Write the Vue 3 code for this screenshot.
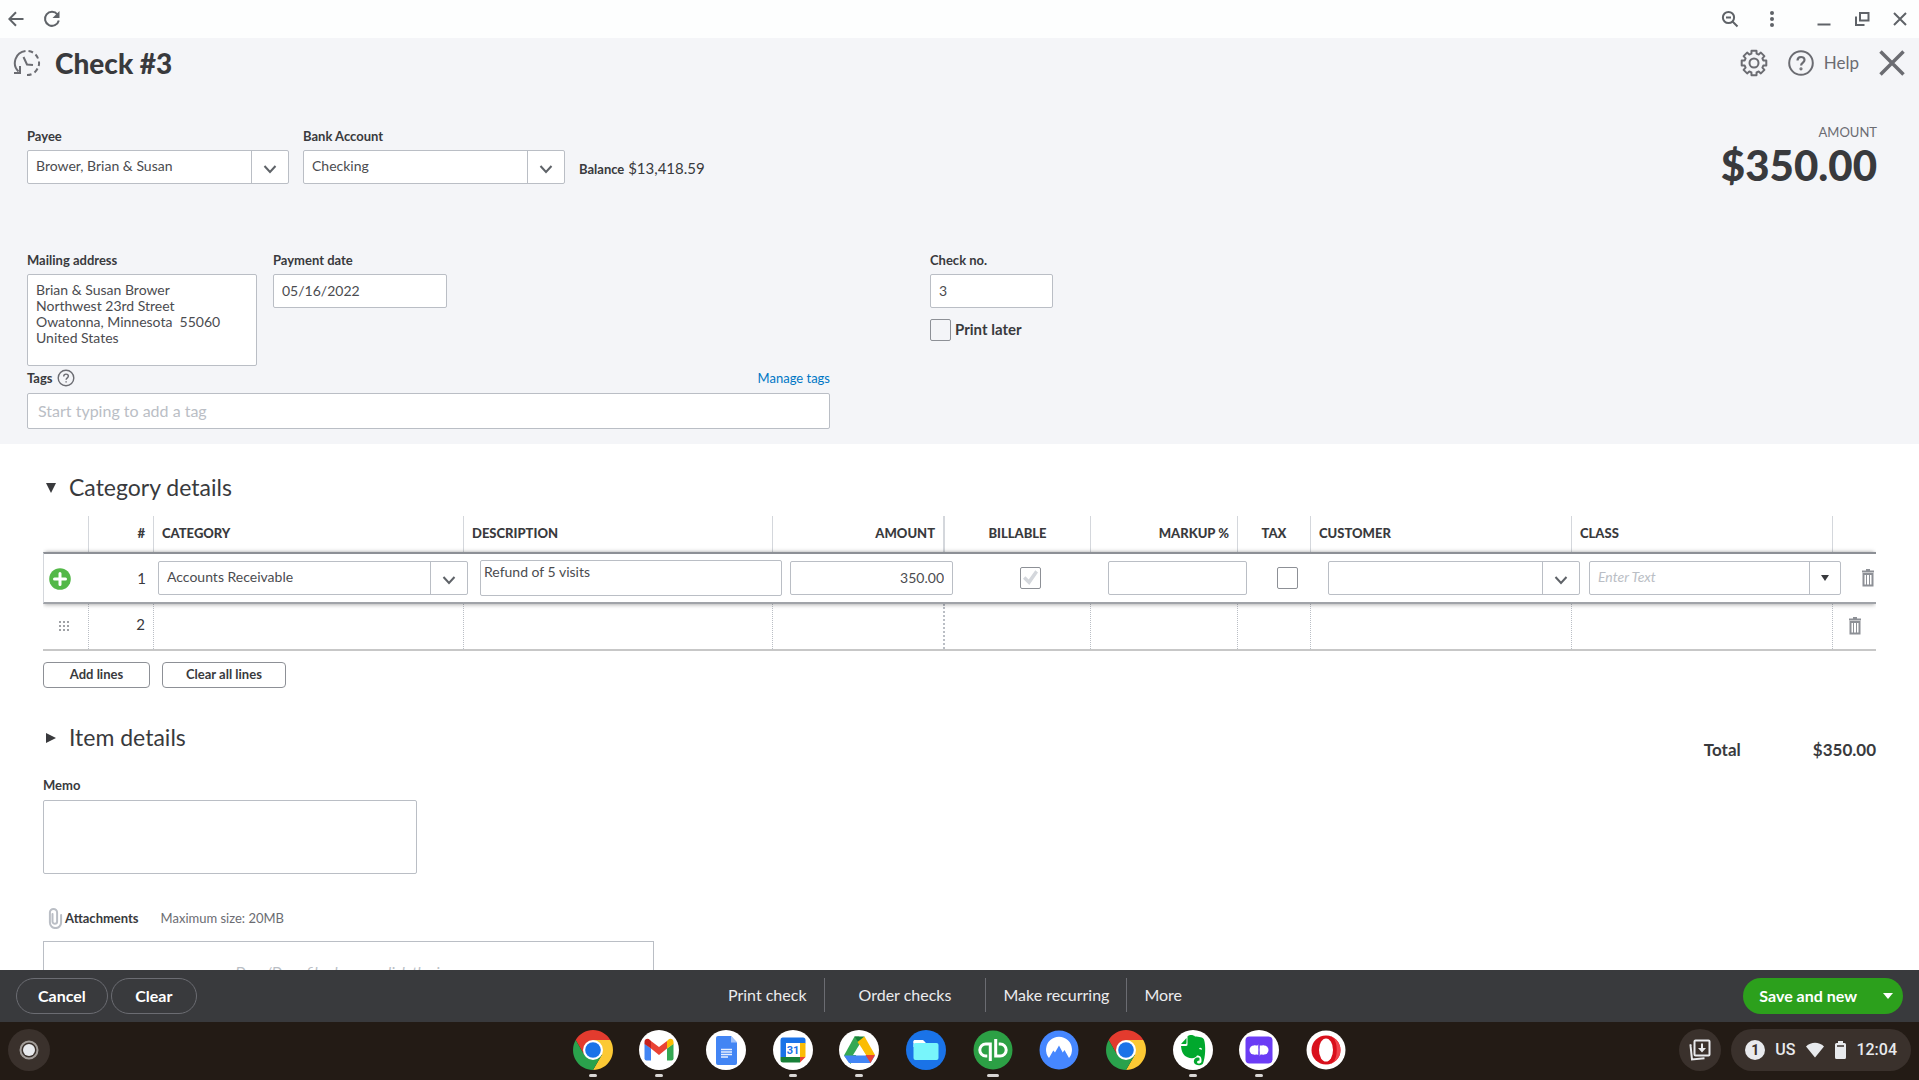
<template>
  <div class="window">
    <!-- browser bar -->
    <nav class="browser-bar">
      <button class="icon-btn" aria-label="Back">
        <svg width="16" height="16" viewBox="0 0 16 16"><path d="M15.500 8H1.500M8 1.300L1.300 8L8 14.700" class="line" /></svg>
      </button>
      <button class="icon-btn" aria-label="Reload">
        <svg width="18" height="18" viewBox="0 0 18 18"><path d="M14.500 4.500A7 7 0 1 0 15.800 10.500" class="line" /><path d="M16.500 1v7h-7z" fill="#5f6368" /></svg>
      </button>
      <div class="window-controls">
        <button class="icon-btn zoom" aria-label="Zoom">
          <svg width="18" height="18" viewBox="0 0 18 18"><circle cx="7.500" cy="7.500" r="5.600" class="line" /><path d="M11.500 11.500L16.500 16.500M5 7.500h5" class="line" /></svg>
        </button>
        <button class="icon-btn" aria-label="More options">
          <svg width="18" height="18" viewBox="0 0 18 18" fill="#5f6368"><circle cx="9" cy="3" r="2" /><circle cx="9" cy="9" r="2" /><circle cx="9" cy="15" r="2" /></svg>
        </button>
        <button class="icon-btn wide" aria-label="Minimize">
          <svg width="18" height="18" viewBox="0 0 18 18"><path d="M2.500 14.500h13" class="line" /></svg>
        </button>
        <button class="icon-btn" aria-label="Restore">
          <svg width="18" height="18" viewBox="0 0 18 18"><path d="M7 3h8.500v7.500H7zM3 6.500v8.500h8.500" class="line" /></svg>
        </button>
        <button class="icon-btn" aria-label="Close window">
          <svg width="18" height="18" viewBox="0 0 18 18"><path d="M3 3l12 12M15 3L3 15" class="line" /></svg>
        </button>
      </div>
    </nav>

    <main class="content">
      <section class="top">
        <header class="title-bar">
          <button class="icon-btn" aria-label="Recent checks">
            <svg width="28" height="28" viewBox="0 0 28 28" fill="none" stroke="#6b6c72" stroke-width="2">
              <path d="M12.500 2A12 12 0 0 0 5.500 22.500M1 24h6v-7" />
              <path d="M15.500 2.100A12 12 0 0 1 20 3.500M22.500 5.500A12 12 0 0 1 25 9.500M26 12.500a12 12 0 0 1-.3 4.500M24.500 19.500a12 12 0 0 1-3 4M18.500 25.200a12 12 0 0 1-4.500.8" />
              <path d="M10.500 8l3.500 7.500 6 .5" />
            </svg>
          </button>
          <h1>Check #3</h1>
          <div class="title-actions">
            <button class="icon-btn" aria-label="Settings">
              <svg width="28" height="28" viewBox="0 0 28 28" fill="none" stroke="#6b6c72" stroke-width="2" stroke-linejoin="round">
                <path :d="gearPath" />
                <circle cx="14" cy="14" r="4.500" />
              </svg>
            </button>
            <button class="help-btn">
              <svg width="26" height="26" viewBox="0 0 26 26" fill="none" stroke="#6b6c72" stroke-width="2"><circle cx="13" cy="13" r="11.800" /><path d="M9.500 10.500c0-4.700 7-4.500 7-.5 0 2.700-3.400 2.400-3.400 5.600" stroke-width="2.200" /><circle cx="13" cy="18.800" r=".6" /></svg>
              <span>Help</span>
            </button>
            <button class="icon-btn" aria-label="Close check">
              <svg width="26" height="26" viewBox="0 0 26 26"><path d="M1.500 1.500l23 23M24.500 1.500l-23 23" stroke="#6b6c72" stroke-width="3.500" /></svg>
            </button>
          </div>
        </header>

        <div class="payee-row">
          <div class="field payee">
            <label for="payee">Payee</label>
            <div class="select">
              <select id="payee"><option>Brower, Brian &amp; Susan</option></select>
              <span class="arrow"><svg width="14" height="10" viewBox="0 0 14 10"><path d="M1.500 2L7 8l5.500-6" class="line" /></svg></span>
            </div>
          </div>
          <div class="field payee">
            <label for="bank">Bank Account</label>
            <div class="select">
              <select id="bank"><option>Checking</option></select>
              <span class="arrow"><svg width="14" height="10" viewBox="0 0 14 10"><path d="M1.500 2L7 8l5.500-6" class="line" /></svg></span>
            </div>
          </div>
          <p class="balance"><b>Balance</b> $13,418.59</p>
          <div class="amount">
            <span>AMOUNT</span>
            <strong>$350.00</strong>
          </div>
        </div>

        <div class="address-row">
          <div class="address-left">
            <div class="field address">
              <label for="address">Mailing address</label>
              <textarea id="address" v-model="address"></textarea>
            </div>
            <div class="field date">
              <label for="date">Payment date</label>
              <input id="date" type="text" v-model="date" />
            </div>
          </div>
          <div class="field check-no">
            <label for="checkno">Check no.</label>
            <input id="checkno" type="text" v-model="checkNo" />
            <div class="print-later">
              <input id="print" type="checkbox" />
              <label for="print">Print later</label>
            </div>
          </div>
        </div>

        <div class="tags-row">
          <div class="tags">
            <div class="tags-head">
              <label for="tags">Tags</label>
              <svg width="18" height="18" viewBox="0 0 18 18" fill="none" stroke="#6b6c72"><circle cx="9" cy="9" r="7.800" stroke-width="1.400" /><path d="M6.700 7.500c0-3.200 4.700-3 4.700-.4 0 1.800-2.300 1.700-2.300 3.700M9.100 12.200v1.400" stroke-width="1.400" /></svg>
              <a href="#">Manage tags</a>
            </div>
            <input id="tags" type="text" placeholder="Start typing to add a tag" />
          </div>
        </div>
      </section>

      <section class="details">
        <h2><span class="tri down"></span>Category details</h2>
        <table>
          <thead>
            <tr>
              <th></th>
              <th class="right">#</th>
              <th>CATEGORY</th>
              <th>DESCRIPTION</th>
              <th class="right thick">AMOUNT</th>
              <th class="center">BILLABLE</th>
              <th class="right">MARKUP %</th>
              <th class="center">TAX</th>
              <th>CUSTOMER</th>
              <th>CLASS</th>
              <th></th>
            </tr>
          </thead>
          <tbody>
            <tr class="active">
              <td>
                <button class="icon-btn add" aria-label="Insert line">
                  <svg width="22" height="22" viewBox="0 0 22 22"><circle cx="11" cy="11" r="10.800" fill="#53b848" /><path d="M11 5.500v11M5.500 11h11" stroke="#fff" stroke-width="3" stroke-linecap="round" /></svg>
                </button>
              </td>
              <td class="num">1</td>
              <td class="c-category">
                <div class="select">
                  <select aria-label="Category"><option>Accounts Receivable</option></select>
                  <span class="arrow"><svg width="14" height="10" viewBox="0 0 14 10"><path d="M1.500 2L7 8l5.500-6" class="line" /></svg></span>
                </div>
              </td>
              <td class="c-description"><textarea aria-label="Description" v-model="description"></textarea></td>
              <td class="c-amount"><input type="text" aria-label="Amount" v-model="amount" /></td>
              <td class="c-check"><input type="checkbox" aria-label="Billable" checked disabled /></td>
              <td><input type="text" aria-label="Markup %" /></td>
              <td class="c-check"><input type="checkbox" aria-label="Tax" /></td>
              <td>
                <div class="select">
                  <select aria-label="Customer"><option></option></select>
                  <span class="arrow"><svg width="14" height="10" viewBox="0 0 14 10"><path d="M1.500 2L7 8l5.500-6" class="line" /></svg></span>
                </div>
              </td>
              <td class="c-class">
                <div class="select">
                  <select aria-label="Class" class="empty"><option>Enter Text</option></select>
                  <span class="arrow narrow"><i class="caret"></i></span>
                </div>
              </td>
              <td class="c-trash">
                <button class="icon-btn" aria-label="Delete line 1">
                  <svg width="12" height="18" viewBox="0 0 12 18" fill="none" stroke="#8d9096"><path d="M0 2.500h12M4 1h4" stroke-width="2" /><path d="M1.500 5v11.500h9V5z" stroke-width="2" /><path d="M4.500 5v11M7.500 5v11" /></svg>
                </button>
              </td>
            </tr>
            <tr class="plain">
              <td>
                <svg class="grip" width="12" height="12" viewBox="0 0 12 12" fill="#a0a2a6">
                  <template v-for="y in 3"><rect v-for="x in 3" :key="x + '-' + y" :x="x * 4 - 3" :y="y * 4 - 3" width="2" height="2" /></template>
                </svg>
              </td>
              <td class="num">2</td>
              <td></td>
              <td></td>
              <td class="thick"></td>
              <td></td>
              <td></td>
              <td></td>
              <td></td>
              <td></td>
              <td class="c-trash">
                <button class="icon-btn" aria-label="Delete line 2">
                  <svg width="12" height="18" viewBox="0 0 12 18" fill="none" stroke="#8d9096"><path d="M0 2.500h12M4 1h4" stroke-width="2" /><path d="M1.500 5v11.500h9V5z" stroke-width="2" /><path d="M4.500 5v11M7.500 5v11" /></svg>
                </button>
              </td>
            </tr>
          </tbody>
        </table>
        <div class="line-buttons">
          <button>Add lines</button>
          <button>Clear all lines</button>
        </div>

        <div class="item-row">
          <h2><span class="tri side"></span>Item details</h2>
          <p class="total"><span>Total</span><span>$350.00</span></p>
        </div>

        <div class="field memo">
          <label for="memo">Memo</label>
          <textarea id="memo"></textarea>
        </div>

        <div class="attach-head">
          <svg width="16" height="22" viewBox="0 0 16 22" fill="none" stroke="#babec5" stroke-width="2" stroke-linecap="round"><path d="M5.500 7v7.500a2.300 2.300 0 0 0 4.600 0V5.500a3.600 3.600 0 0 0-7.200 0V15.500a5.600 5.600 0 0 0 11.200 0V8" /></svg>
          <label for="files">Attachments</label>
          <span>Maximum size: 20MB</span>
        </div>
        <button id="files" class="drop">Drag/Drop files here or click the icon</button>
      </section>
    </main>

    <footer class="actions">
      <div class="actions-left">
        <button>Cancel</button>
        <button>Clear</button>
      </div>
      <div class="actions-mid">
        <a href="#">Print check</a>
        <a href="#" class="roomy">Order checks</a>
        <a href="#">Make recurring</a>
        <a href="#">More</a>
      </div>
      <div class="actions-right">
        <div class="save">
          <button>Save and new</button>
          <button class="save-more" aria-label="More save options"><i class="caret"></i></button>
        </div>
      </div>
    </footer>

    <!-- system shelf -->
    <div class="shelf">
      <button class="launcher" aria-label="Launcher">
        <svg width="20" height="20" viewBox="0 0 20 20"><circle cx="10" cy="10" r="8.500" fill="none" stroke="#a29d99" stroke-width="2" /><circle cx="10" cy="10" r="6" fill="#e8eaed" /></svg>
      </button>
      <div class="apps">
        <button v-for="(app, i) in apps" :key="i" class="app" :class="app.state" :aria-label="app.label">
          <svg width="40" height="40" viewBox="0 0 40 40">
            <template v-if="app.icon === 'chrome'">
              <path d="M2.700 10A20 20 0 0 1 37.300 10H20L11.300 25z" fill="#e33b2e" />
              <path d="M20 10h17.300A20 20 0 0 1 20 40l8.700-15z" fill="#fcc934" />
              <path d="M2.700 10A20 20 0 0 0 20 40l8.700-15H11.300z" fill="#2aa24c" />
              <circle cx="20" cy="20" r="10" fill="#fff" />
              <circle cx="20" cy="20" r="7.800" fill="#1a73e8" />
            </template>
            <template v-else-if="app.icon === 'gmail'">
              <circle cx="20" cy="20" r="20" fill="#fff" />
              <path d="M5.500 13.500l6.500 5V30.500H7.500a2 2 0 0 1-2-2z" fill="#4285f4" />
              <path d="M34.500 13.500l-6.500 5V30.500h4.500a2 2 0 0 0 2-2z" fill="#34a853" />
              <path d="M12 11l8 6 8-6v7.500l-8 6.500-8-6.500z" fill="#ea4335" />
              <path d="M5.500 14v-2c0-3.200 3.500-4.200 5.500-2l1 1v7.500z" fill="#c5221f" />
              <path d="M34.500 14v-2c0-3.200-3.500-4.200-5.500-2l-1 1v7.500z" fill="#fbbc04" />
            </template>
            <template v-else-if="app.icon === 'docs'">
              <circle cx="20" cy="20" r="20" fill="#fff" />
              <path d="M12 6h13l6 6.500V33a2 2 0 0 1-2 2H12a2 2 0 0 1-2-2V8a2 2 0 0 1 2-2z" fill="#4285f4" />
              <path d="M25 6l6 6.500h-6z" fill="#a1c2fa" />
              <path d="M15 19.500h11M15 22h11M15 24.500h11M15 27h7" stroke="#e8f0fe" stroke-width="1.400" />
            </template>
            <template v-else-if="app.icon === 'calendar'">
              <circle cx="20" cy="20" r="20" fill="#fff" />
              <path d="M9.500 7.500H30a2.500 2.500 0 0 1 2.500 2.500v3.500H13v13.500H7.500V10a2.500 2.500 0 0 1 2-2.500z" fill="#1a73e8" />
              <path d="M27 13h5.500v14H27z" fill="#fbbc04" />
              <path d="M7.500 27H27v5.500H10a2.500 2.500 0 0 1-2.500-2.500z" fill="#188038" />
              <path d="M27 27h5.500L27 32.500z" fill="#ea4335" />
              <path d="M13 13h14v14H13z" fill="#fff" />
              <text x="20" y="24" text-anchor="middle" class="cal-day">31</text>
            </template>
            <template v-else-if="app.icon === 'drive'">
              <circle cx="20" cy="20" r="20" fill="#fff" />
              <path d="M15.500 6.500h4.500L24.500 14 11.500 34 5 25.500z" fill="#34a853" />
              <path d="M15.500 6.500h10L20.500 14z" fill="#188038" />
              <path d="M25.500 6.500L36 25H26.500L18.500 12z" fill="#fbbc04" />
              <path d="M5 25.500h31L31.500 33H10z" fill="#4285f4" />
              <path d="M26.500 25H36l-4.500 8z" fill="#ea4335" />
              <path d="M20.500 14.500L27 25H14z" fill="#fff" />
            </template>
            <template v-else-if="app.icon === 'files'">
              <circle cx="20" cy="20" r="20" fill="#1a73e8" />
              <path d="M9 10h8l3 3h10v4H7.500v-5.500A1.500 1.500 0 0 1 9 10z" fill="#fff" />
              <rect x="7.500" y="13" width="25" height="17" rx="2" fill="#78f5fb" />
              <path d="M7.500 13h9l2-1.500-3-1.500H9a1.500 1.500 0 0 0-1.500 1.500z" fill="#fff" />
            </template>
            <template v-else-if="app.icon === 'books'">
              <circle cx="20" cy="20" r="19.500" fill="#2ca045" />
              <path d="M17.300 31V14h-4.500a6 6 0 0 0 0 12h1.500M22.700 9v17h4.500a6 6 0 0 0 0-12h-1.500" fill="none" stroke="#fff" stroke-width="3" />
            </template>
            <template v-else-if="app.icon === 'mountain'">
              <circle cx="20" cy="20" r="19.500" fill="#4687ff" />
              <path d="M10 28A13 13 0 1 1 30 28L25.500 20l-1.800 2.500L20 15.500l-4 7-1.700-2z" fill="#fff" />
            </template>
            <template v-else-if="app.icon === 'elephant'">
              <circle cx="20" cy="20" r="20" fill="#fff" />
              <path d="M14.500 6.500c1-2 6-2 7.500 0 4 .3 8 .4 9 3 2 6 1.500 18-1 24-1.500 2.500-8 2.500-9-1-.8-4 3-6 5.500-4.500v2.500c-2 0-2.800 1-2.300 2.200.7 1.500 4 1 4.300-1.200.3-4-1-6-4.500-6-1.500 3.500-6.500 3-9.500 1.800-4-1.500-6-5.500-6.500-11.300h5c1.500 0 1.500-.7 1.500-2z" fill="#00a82d" />
              <path d="M8 14l5.500-6v4.500c0 1-.5 1.500-1.500 1.500z" fill="#00a82d" />
              <path d="M26 19c.5-2 3-1.500 3 .8z" fill="#fff" />
            </template>
            <template v-else-if="app.icon === 'violet'">
              <circle cx="20" cy="20" r="20" fill="#fff" />
              <rect x="6.500" y="6.500" width="27" height="27" rx="4" fill="#6b3cf5" />
              <circle cx="15" cy="20" r="4.500" fill="#fff" />
              <circle cx="25" cy="20" r="4.500" fill="#fff" />
              <path d="M15 15.500h3.500l1-1.500v11l-1.500-.5h-3zM25 24.500h-3.500l-1 2v-11l1.500 0h3z" fill="#fff" />
              <path d="M20 13v14" stroke="#6b3cf5" />
            </template>
            <template v-else>
              <circle cx="20" cy="20" r="19.500" fill="#fff" />
              <circle cx="20" cy="20" r="14.500" fill="#d9101c" />
              <path d="M20 5.500a14.500 14.500 0 0 1 0 29 14 14 0 0 0 7-2c5-5 5-20 0-25a14 14 0 0 0-7-2z" fill="#f0434b" />
              <ellipse cx="20" cy="20" rx="7" ry="11.500" fill="#fff" />
            </template>
          </svg>
        </button>
      </div>
      <div class="tray">
        <button class="tray-round" aria-label="Holding space">
          <svg width="22" height="22" viewBox="0 0 22 22" fill="none" stroke="#e8eaed" stroke-width="2"><rect x="5.500" y="1.500" width="15" height="15" rx="1" /><path d="M2.500 6l-1 .3 1.500 14.200 12.500-1.300M13 4.500v7" /><path d="M9 9h8l-4 4.500z" fill="#e8eaed" stroke="none" /></svg>
        </button>
        <button class="status">
          <span class="badge">1</span>
          <span>US</span>
          <svg width="20" height="16" viewBox="0 0 20 16"><path d="M1 4.500C6-.5 14-.5 19 4.500L10 15.500z" fill="#e8eaed" /></svg>
          <svg width="11" height="18" viewBox="0 0 11 18"><path d="M3 0h5v2h1.500A1.500 1.500 0 0 1 11 3.500v13a1.500 1.500 0 0 1-1.500 1.500h-8A1.500 1.500 0 0 1 0 16.500v-13A1.500 1.500 0 0 1 1.500 2H3z" fill="#e8eaed" /><path d="M2 5h7" stroke="#3a312c" stroke-width="1.500" /></svg>
          <span>12:04</span>
        </button>
      </div>
    </div>
  </div>
</template>

<script setup>
import { ref } from 'vue';

const address = ref('Brian & Susan Brower\nNorthwest 23rd Street\nOwatonna, Minnesota  55060\nUnited States');
const date = ref('05/16/2022');
const checkNo = ref('3');
const description = ref('Refund of 5 visits');
const amount = ref('350.00');

const apps = [
  { icon: 'chrome', label: 'Chrome', state: 'open' },
  { icon: 'gmail', label: 'Gmail', state: 'open' },
  { icon: 'docs', label: 'Docs', state: '' },
  { icon: 'calendar', label: 'Calendar', state: 'open' },
  { icon: 'drive', label: 'Drive', state: 'open' },
  { icon: 'files', label: 'Files', state: '' },
  { icon: 'books', label: 'QuickBooks', state: 'open current' },
  { icon: 'mountain', label: 'NordVPN', state: '' },
  { icon: 'chrome', label: 'Chrome', state: '' },
  { icon: 'elephant', label: 'Evernote', state: 'open' },
  { icon: 'violet', label: 'Recorder', state: 'open' },
  { icon: 'opera', label: 'Opera', state: '' },
];

// eight teeth around the centre of a 28px box
const gear = () => {
  const points = [];
  for (let i = 0; i < 8; i++) {
    const mid = (i * Math.PI) / 4;
    [[-0.27, 9.6], [-0.2, 12.5], [0.2, 12.5], [0.27, 9.6]].forEach(([offset, r]) => {
      points.push(`${(14 + r * Math.sin(mid + offset)).toFixed(1)} ${(14 - r * Math.cos(mid + offset)).toFixed(1)}`);
    });
  }
  return `M${points.join('L')}Z`;
};
const gearPath = gear();
</script>

<style>
body {
  margin: 0;
  background: #fff;
}
</style>

<style scoped>
* {
  box-sizing: border-box;
}

.window {
  display: flex;
  flex-direction: column;
  height: 100vh;
  overflow: hidden;
  font-family: Lato, 'Open Sans', sans-serif;
  font-size: 14px;
  line-height: 20px;
  color: #393a3d;
}

button, input, select, textarea {
  font: inherit;
  color: inherit;
  margin: 0;
}
button {
  padding: 0;
  border: none;
  background: none;
  cursor: pointer;
}
svg {
  display: block;
  flex: none;
}
h1, h2, p {
  margin: 0;
}
.icon-btn {
  display: flex;
}
.line {
  fill: none;
  stroke: #5f6368;
  stroke-width: 2;
}

.browser-bar {
  display: flex;
  align-items: center;
  flex: none;
  gap: 19px;
  height: 38px;
  padding: 0 9px 0 8px;
  background: #fdfefe;
}
.window-controls {
  display: flex;
  gap: 18px;
  margin-left: auto;
}
.window-controls .icon-btn {
  padding: 0 1px;
}
.window-controls .zoom {
  margin-right: 4px;
}
.window-controls .wide {
  margin-left: 14px;
}

.content {
  flex: 1;
  min-height: 0;
  overflow: hidden;
}

/* top part */
.top {
  padding-bottom: 15px;
  background: #f4f5f8;
}
.title-bar {
  display: flex;
  align-items: center;
  gap: 14px;
  height: 50px;
  padding: 0 14px 0 13px;
}
h1 {
  font-size: 28px;
  line-height: 36px;
  font-weight: 900;
}
.title-actions {
  display: flex;
  align-items: center;
  gap: 20px;
  margin-left: auto;
}
.help-btn {
  display: flex;
  align-items: center;
  gap: 10px;
  font-size: 17px;
  color: #6b6c72;
}

label, .balance b {
  font-size: 13px;
  font-weight: 700;
}
.field {
  display: flex;
  flex-direction: column;
  gap: 4px;
}

input[type='text'], textarea, .select {
  width: 100%;
  height: 34px;
  border: 1px solid #babec5;
  border-radius: 2px;
  background: #fff;
  color: #4b4c50;
  outline: none;
}
input[type='text'] {
  padding: 0 8px 2px;
}
textarea {
  display: block;
  padding: 7px 8px;
  line-height: 16px;
  resize: none;
  overflow: hidden;
}
.select {
  position: relative;
}
.select select {
  display: block;
  width: 100%;
  height: 32px;
  padding: 0 46px 2px 8px;
  border: none;
  background: none;
  appearance: none;
  outline: none;
}
.select .empty {
  font-style: italic;
  color: #babec5;
}
.arrow {
  position: absolute;
  top: 0;
  right: 0;
  bottom: 0;
  display: flex;
  align-items: center;
  justify-content: center;
  width: 37px;
  padding-top: 4px;
  border-left: 1px solid #babec5;
  pointer-events: none;
}
.arrow.narrow {
  width: 31px;
  padding-top: 0;
  color: #393a3d;
}
.caret {
  width: 0;
  height: 0;
  border: 4px solid transparent;
  border-top: 6px solid currentColor;
  border-bottom: 0;
}

input[type='checkbox'] {
  flex: none;
  width: 21px;
  height: 22px;
  border: 1px solid #8d9096;
  border-radius: 2px;
  appearance: none;
}
input[type='checkbox']:checked::after {
  content: '';
  display: block;
  width: 15px;
  height: 15px;
  margin: 2px;
  background: #d4d7dc;
  clip-path: polygon(0 58%, 16% 42%, 38% 64%, 82% 2%, 100% 16%, 42% 100%);
}

.payee-row {
  display: flex;
  gap: 14px;
  padding: 38px 42px 0 27px;
}
.payee {
  width: 262px;
}
.balance {
  align-self: flex-end;
  font-size: 15px;
  line-height: 30px;
}
.amount {
  display: flex;
  flex-direction: column;
  align-items: flex-end;
  margin: -4px 0 -6px auto;
}
.amount span {
  font-size: 13px;
  color: #6b6c72;
}
.amount strong {
  font-size: 42px;
  line-height: 46px;
  font-weight: 900;
}

.address-row, .tags-row {
  display: grid;
  grid-template-columns: 803fr 989fr;
  gap: 100px;
  padding-left: 27px;
}
.address-row {
  padding-top: 66px;
}
.address-left {
  display: flex;
  gap: 16px;
}
.address {
  width: 230px;
}
.address textarea {
  height: 92px;
}
.date {
  width: 174px;
}
.check-no input[type='text'] {
  width: 123px;
}
.print-later {
  display: flex;
  gap: 4px;
  margin-top: 7px;
}
.print-later label {
  font-size: 15px;
}
.tags-row {
  padding-top: 2px;
}
.tags-head {
  display: flex;
  align-items: center;
  gap: 4px;
  height: 20px;
  margin-bottom: 5px;
}
.tags-head a {
  margin-left: auto;
  font-size: 13px;
  color: #0077c5;
  text-decoration: none;
}
.tags input[type='text'] {
  height: 36px;
  padding: 0 10px 2px;
  font-size: 16px;
}
input::placeholder {
  color: #babec5;
}

/* lines table */
.details {
  padding: 28px 43px 0;
}
h2 {
  display: flex;
  align-items: center;
  font-size: 23px;
  line-height: 30px;
  font-weight: 400;
}
.tri {
  width: 0;
  height: 0;
  margin: 2px 13px 0 3px;
  border: 5px solid transparent;
}
.tri.down {
  border-top: 10px solid #393a3d;
  border-bottom: 0;
}
.tri.side {
  border-left: 10px solid #393a3d;
  border-right: 0;
}

table {
  display: block;
  margin-top: 14px;
}
thead, tbody {
  display: block;
}
tr {
  display: grid;
  grid-template-columns: 46px 65px 310fr 309fr 172fr 146fr 147fr 73fr 261fr 261fr 43fr;
}
th, td {
  display: block;
  min-width: 0;
  padding: 0;
  font-weight: 400;
  text-align: left;
}
th {
  height: 36px;
  padding: 0 8px;
  border-right: 1px solid #d4d7dc;
  font-size: 13px;
  line-height: 34px;
  font-weight: 900;
}
th:last-child, .plain td:last-child {
  border-right: none;
}
th.right {
  text-align: right;
}
th.center {
  text-align: center;
}
th.thick {
  border-right: 2px solid #d4d7dc;
}
.active {
  position: relative;
  grid-template-columns: 46px 64px 314fr 314fr 171fr 155fr 139fr 81fr 252fr 261fr 35fr;
  align-items: center;
  height: 52px;
  border-top: 2px solid #8d9096;
  border-bottom: 2px solid #a0a3a8;
  border-left: 1px solid #d4d7dc;
  box-shadow: 0 -2px 4px -2px rgba(0, 0, 0, 0.35), 0 2px 4px -1px rgba(0, 0, 0, 0.3);
  clip-path: inset(-8px 0);
}
.active td:first-child {
  padding: 2px 0 0 5px;
}
.num {
  padding-right: 8px;
  font-size: 15px;
  text-align: right;
}
.c-category {
  padding-left: 4px;
}
.c-description {
  padding-left: 12px;
}
.c-description textarea {
  height: 36px;
  padding: 3px;
}
.c-amount {
  padding-left: 8px;
}
.c-amount input {
  text-align: right;
}
.c-check {
  display: flex;
  justify-content: center;
}
.c-class {
  padding-left: 9px;
}
.active .c-trash {
  padding-left: 21px;
}
.plain {
  height: 47px;
  border-bottom: 2px solid #c7c7c7;
}
.plain td {
  border-right: 1px dotted #babec5;
}
.plain .thick {
  border-right: 2px dotted #babec5;
}
.plain .num {
  line-height: 40px;
}
.grip {
  margin: 16px 0 0 15px;
}
.plain .c-trash {
  padding: 13px 0 0 16px;
}

.line-buttons {
  display: flex;
  gap: 12px;
  margin-top: 11px;
}
.line-buttons button {
  min-width: 107px;
  height: 26px;
  padding: 0 23px 2px;
  border: 1px solid #8d9096;
  border-radius: 4px;
  background: #fff;
  font-size: 13px;
  line-height: 20px;
  font-weight: 700;
}

.item-row {
  display: flex;
  align-items: flex-start;
  justify-content: space-between;
  margin-top: 34px;
}
.total {
  display: flex;
  gap: 72px;
  padding-top: 18px;
  font-size: 17px;
  font-weight: 700;
}
.memo {
  width: 374px;
  margin-top: 15px;
}
.memo textarea {
  height: 74px;
  margin-top: 1px;
}
.attach-head {
  display: flex;
  align-items: center;
  gap: 2px;
  margin-top: 33px;
  padding-left: 4px;
}
.attach-head span {
  margin-left: 20px;
  font-size: 13px;
  color: #6b6c72;
}
.drop {
  display: block;
  width: 611px;
  height: 90px;
  margin-top: 12px;
  padding: 20px 0 48px;
  border: 1px solid #babec5;
  font-size: 15px;
  font-style: italic;
  color: #babec5;
}

/* action bar */
.actions {
  display: grid;
  grid-template-columns: 1fr auto 1fr;
  align-items: center;
  flex: none;
  height: 52px;
  padding: 0 16px;
  background: #393a3d;
  color: #fff;
}
.actions-left {
  display: flex;
  gap: 3px;
}
.actions-left button {
  min-width: 86px;
  height: 36px;
  padding: 0 21px;
  border: 1px solid #6b6c72;
  border-radius: 18px;
  font-size: 16px;
  font-weight: 700;
}
.actions-mid {
  display: flex;
  padding: 0 9px 2px 0;
}
.actions-mid a {
  padding: 0 17px;
  border-right: 1px solid #6b6c72;
  font-size: 16px;
  line-height: 34px;
  color: #ececee;
  text-decoration: none;
}
.actions-mid .roomy {
  padding: 0 34px;
}
.actions-mid a:last-child {
  border-right: none;
}
.actions-right {
  display: flex;
  justify-content: flex-end;
}
.save {
  display: flex;
  border-radius: 18px;
  background: #2ca01c;
}
.save button {
  height: 36px;
  padding: 0 16px;
  font-size: 16px;
  font-weight: 700;
}
.save .save-more {
  padding: 0 10px;
}
.save .caret {
  display: block;
  border-width: 6px 5px 0;
}

/* shelf */
.shelf {
  display: grid;
  grid-template-columns: 1fr auto 1fr;
  align-items: center;
  flex: none;
  height: 58px;
  padding: 0 8px 2px;
  background: #231b15;
  font-family: Roboto, sans-serif;
  color: #e8eaed;
}
.launcher, .tray-round {
  display: flex;
  align-items: center;
  justify-content: center;
  width: 42px;
  height: 42px;
  border-radius: 50%;
  background: #3a312c;
}
.apps {
  display: grid;
  grid-template-columns: repeat(12, 1fr);
  width: 800px;
}
.app {
  position: relative;
  display: flex;
  justify-content: center;
}
.app.open::after {
  content: '';
  position: absolute;
  bottom: -7px;
  width: 8px;
  height: 3px;
  border-radius: 2px;
  background: #d8d6d4;
}
.app.current::after {
  width: 12px;
}
.cal-day {
  font: 700 11px Roboto, sans-serif;
  fill: #1a73e8;
}
.tray {
  display: flex;
  justify-content: flex-end;
  gap: 10px;
}
.status {
  display: flex;
  align-items: center;
  gap: 10px;
  height: 42px;
  padding: 0 14px;
  border-radius: 21px;
  background: #3a312c;
  font-size: 16px;
  font-weight: 500;
}
.badge {
  width: 20px;
  height: 20px;
  border-radius: 50%;
  background: #e8eaed;
  font-size: 14px;
  font-weight: 700;
  color: #3a312c;
}
</style>
